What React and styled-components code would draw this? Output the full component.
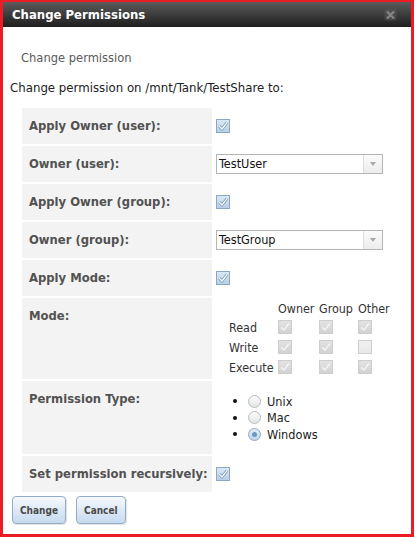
import React from 'react';
import styled, { createGlobalStyle, css } from 'styled-components';

const GlobalStyle = createGlobalStyle`
  html, body { margin: 0; padding: 0; background: #fff; }
  body { font-family: "DejaVu Sans Condensed", "DejaVu Sans", sans-serif; }
  * { box-sizing: border-box; }
`;

const Frame = styled.div`
  width: 414px;
  height: 537px;
  border-style: solid;
  border-color: #ed1c24;
  border-width: 2px 3px 3px 3px;
  display: flex;
  flex-direction: column;
  background: #fff;
`;

const TitleBar = styled.div`
  height: 25px;
  flex: none;
  display: flex;
  align-items: center;
  justify-content: space-between;
  padding: 0 14px 0 9px;
  background: linear-gradient(#5b5b5b, #1e1e1e);
`;

const Title = styled.h1`
  margin: 0;
  font: bold 13px/25px "DejaVu Sans Condensed", "DejaVu Sans", sans-serif;
  color: #fff;
`;

const CloseIcon = styled.svg`
  display: block;
  width: 13px;
  height: 12px;
`;

const Content = styled.div`
  flex: 1;
  padding: 0 7px;
  display: flex;
  flex-direction: column;
  align-items: flex-start;
`;

const Heading = styled.div`
  margin: 23px 0 0 11px;
  font-size: 12.8px;
  line-height: 15px;
  color: #5a5a5a;
`;

const Intro = styled.p`
  margin: 15px 0 0;
  font-size: 13.1px;
  line-height: 15px;
  color: #222;
`;

const FormGrid = styled.div`
  margin: 13px 0 0 12px;
  display: grid;
  grid-template-columns: 190px 180px;
  column-gap: 2px;
  row-gap: 2px;
`;

const LabelCell = styled.div`
  min-height: 36px;
  padding: 11px 0 11px 7px;
  background: #f3f3f3;
  font: bold 11.6px/14px "DejaVu Sans", sans-serif;
  color: #525252;
  white-space: nowrap;
`;

const ValueCell = styled.div`
  display: flex;
  align-items: ${(p) => (p.$top ? 'flex-start' : 'center')};
  padding-left: 2px;
`;

const CheckBox = styled.span`
  display: inline-flex;
  width: 14px;
  height: 14px;
  flex: none;
  border: 1px solid ${(p) => (p.$disabled ? '#cdcdcd' : '#8ea8c4')};
  background: ${(p) =>
    p.$disabled
      ? p.$checked
        ? 'linear-gradient(#e2e2e2, #d2d2d2)'
        : 'linear-gradient(#f0f0f0, #e8e8e8)'
      : 'linear-gradient(#dbe8f5, #b7cfe7)'};
  svg { display: block; }
`;

function Check({ checked = true, disabled = false }) {
  return (
    <CheckBox $checked={checked} $disabled={disabled}>
      {checked && (
        <svg width="12" height="12" viewBox="0 0 12 12">
          {!disabled && (
            <path d="M2.2 6.3 L5 9 L10 2.6" stroke="#6a8db2" strokeWidth="2.8" fill="none" strokeLinejoin="round" />
          )}
          <path
            d="M2.2 6.3 L5 9 L10 2.6"
            stroke={disabled ? '#f2f2f2' : '#ffffff'}
            strokeWidth={disabled ? 1.6 : 1.4}
            fill="none"
            strokeLinejoin="round"
          />
        </svg>
      )}
    </CheckBox>
  );
}

const SelectBox = styled.div`
  width: 167px;
  height: 20px;
  display: flex;
  border: 1px solid #b4b4b4;
  background: #fff;
`;

const SelectText = styled.span`
  flex: 1;
  padding-left: 2px;
  font-size: 12.6px;
  line-height: 18px;
  color: #111;
`;

const SelectArrow = styled.span`
  width: 19px;
  display: flex;
  align-items: center;
  justify-content: center;
  border-left: 1px solid #dedede;
  background: linear-gradient(#fbfbfb, #ececec);
  &::after {
    content: '';
    border-left: 3.5px solid transparent;
    border-right: 3.5px solid transparent;
    border-top: 4px solid #a8a8a8;
  }
`;

function Select({ value }) {
  return (
    <SelectBox>
      <SelectText>{value}</SelectText>
      <SelectArrow />
    </SelectBox>
  );
}

const ModeGrid = styled.div`
  margin: 1px 0 2px 13px;
  display: grid;
  grid-template-columns: 49px 41px 39px 36px;
  grid-template-rows: 18px repeat(3, 20px);
  align-items: center;
  font-size: 12.4px;
  line-height: 15px;
  color: #333;
`;

const ModeText = styled.span`
  white-space: nowrap;
`;

const RadioList = styled.ul`
  margin: 12px 0 11.5px;
  padding: 0 0 0 17px;
  list-style: none;
`;

const RadioItem = styled.li`
  height: 16.5px;
  display: flex;
  align-items: center;
  font-size: 12.6px;
  color: #222;
`;

const Bullet = styled.span`
  width: 4px;
  height: 4px;
  border-radius: 50%;
  background: #111;
  margin-right: 11px;
`;

const Radio = styled.span`
  position: relative;
  width: 13px;
  height: 13px;
  margin-right: 6px;
  border-radius: 50%;
  border: 1px solid ${(p) => (p.$checked ? '#8fa9c4' : '#b4bcc6')};
  background: ${(p) =>
    p.$checked ? 'linear-gradient(#e3edf7, #c3d6ea)' : 'linear-gradient(#fdfdfd, #e4e4e4)'};
  ${(p) =>
    p.$checked &&
    css`
      &::after {
        content: '';
        position: absolute;
        left: 3px;
        top: 3px;
        width: 5px;
        height: 5px;
        border-radius: 50%;
        background: #6f98c2;
      }
    `}
`;

const ButtonRow = styled.div`
  display: flex;
  gap: 10px;
  margin: 4px 0 0 2px;
`;

const Button = styled.button`
  height: 28px;
  padding: 0 7px;
  border: 1px solid #94abc5;
  border-radius: 4px;
  background: linear-gradient(#f6f9fd, #c6daef);
  box-shadow: 1px 1px 1px rgba(0, 0, 0, 0.12);
  font: bold 10px "DejaVu Sans Condensed", "DejaVu Sans", sans-serif;
  color: #4a4a4a;
  cursor: pointer;
`;

const modeRows = [
  ['Read', [true, true, true]],
  ['Write', [true, true, false]],
  ['Execute', [true, true, true]],
];

const types = [
  ['Unix', false],
  ['Mac', false],
  ['Windows', true],
];

export default function App() {
  return (
    <>
      <GlobalStyle />
      <Frame>
        <TitleBar>
          <Title>Change Permissions</Title>
          <CloseIcon viewBox="0 0 13 12">
            <rect x="0.5" y="0.5" width="12" height="11" rx="1.5" fill="#6a6a6a" opacity="0.35" />
            <path d="M3 2.5 L10 9.5 M10 2.5 L3 9.5" stroke="#858585" strokeWidth="2.2" />
          </CloseIcon>
        </TitleBar>
        <Content>
          <Heading>Change permission</Heading>
          <Intro>Change permission on /mnt/Tank/TestShare to:</Intro>
          <FormGrid>
            <LabelCell>Apply Owner (user):</LabelCell>
            <ValueCell>
              <Check />
            </ValueCell>

            <LabelCell>Owner (user):</LabelCell>
            <ValueCell>
              <Select value="TestUser" />
            </ValueCell>

            <LabelCell>Apply Owner (group):</LabelCell>
            <ValueCell>
              <Check />
            </ValueCell>

            <LabelCell>Owner (group):</LabelCell>
            <ValueCell>
              <Select value="TestGroup" />
            </ValueCell>

            <LabelCell>Apply Mode:</LabelCell>
            <ValueCell>
              <Check />
            </ValueCell>

            <LabelCell>Mode:</LabelCell>
            <ValueCell $top>
              <ModeGrid>
                <span />
                <ModeText>Owner</ModeText>
                <ModeText>Group</ModeText>
                <ModeText>Other</ModeText>
                {modeRows.map(([name, vals]) => (
                  <React.Fragment key={name}>
                    <ModeText>{name}</ModeText>
                    {vals.map((v, i) => (
                      <Check key={i} checked={v} disabled />
                    ))}
                  </React.Fragment>
                ))}
              </ModeGrid>
            </ValueCell>

            <LabelCell>Permission Type:</LabelCell>
            <ValueCell $top>
              <RadioList>
                {types.map(([name, sel]) => (
                  <RadioItem key={name}>
                    <Bullet />
                    <Radio $checked={sel} />
                    {name}
                  </RadioItem>
                ))}
              </RadioList>
            </ValueCell>

            <LabelCell>Set permission recursively:</LabelCell>
            <ValueCell>
              <Check />
            </ValueCell>
          </FormGrid>
          <ButtonRow>
            <Button>Change</Button>
            <Button>Cancel</Button>
          </ButtonRow>
        </Content>
      </Frame>
    </>
  );
}
